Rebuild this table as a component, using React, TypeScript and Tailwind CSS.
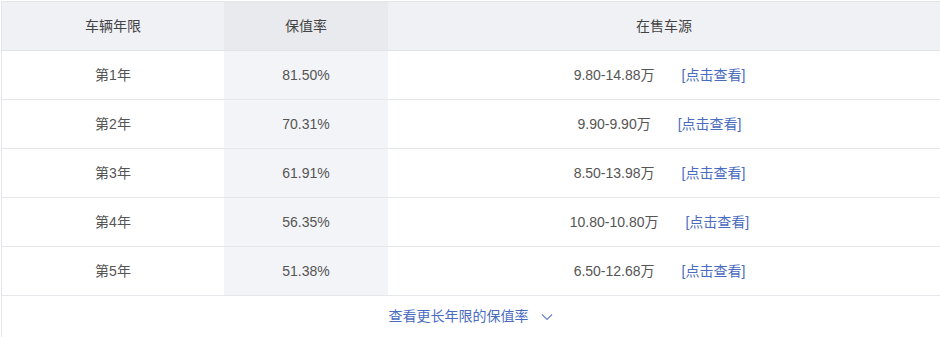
import React from 'react';

interface Row {
  year: string;
  rate: string;
  price: string;
}

const rows: Row[] = [
  { year: '第1年', rate: '81.50%', price: '9.80-14.88万' },
  { year: '第2年', rate: '70.31%', price: '9.90-9.90万' },
  { year: '第3年', rate: '61.91%', price: '8.50-13.98万' },
  { year: '第4年', rate: '56.35%', price: '10.80-10.80万' },
  { year: '第5年', rate: '51.38%', price: '6.50-12.68万' },
];

const App: React.FC = () => {
  return (
    <div
      className="w-[940px] h-[337px] bg-white pt-px pl-px text-[14px] text-[#555]"
      style={{ fontFamily: '"Liberation Sans", "Noto Sans CJK SC", sans-serif' }}
    >
      <div className="border-t border-l border-[#e4e5e8] h-full">
        {/* Header */}
        <div className="flex h-[49px] bg-[#f0f1f5] border-b border-[#e2e3e6] text-[#444]">
          <div className="w-[222px] flex items-center justify-center">车辆年限</div>
          <div className="w-[164px] flex items-center justify-center bg-[#e9eaee]">保值率</div>
          <div className="flex-1 flex items-center justify-center">在售车源</div>
        </div>

        {rows.map((row) => (
          <div key={row.year} className="flex h-[49px] border-b border-[#e6e7ea]">
            <div className="w-[222px] flex items-center justify-center">{row.year}</div>
            <div className="w-[164px] flex items-center justify-center bg-[#f3f4f8]">{row.rate}</div>
            <div className="flex-1 flex items-center justify-center gap-[27px] pr-[9px]">
              <span>{row.price}</span>
              <a href="#" className="text-[#4a6cc0]">[点击查看]</a>
            </div>
          </div>
        ))}

        {/* Footer */}
        <div className="flex h-[41px] items-center justify-center pr-px">
          <a href="#" className="flex items-center gap-[12px] text-[#4a6cc0]">
            查看更长年限的保值率
            <svg className="w-[12px] h-[8px]" viewBox="0 0 12 8" fill="none" stroke="#6b84c4" strokeWidth={1.2}>
              <path d="M1 1.5l5 5 5-5" />
            </svg>
          </a>
        </div>
      </div>
    </div>
  );
};

export default App;
